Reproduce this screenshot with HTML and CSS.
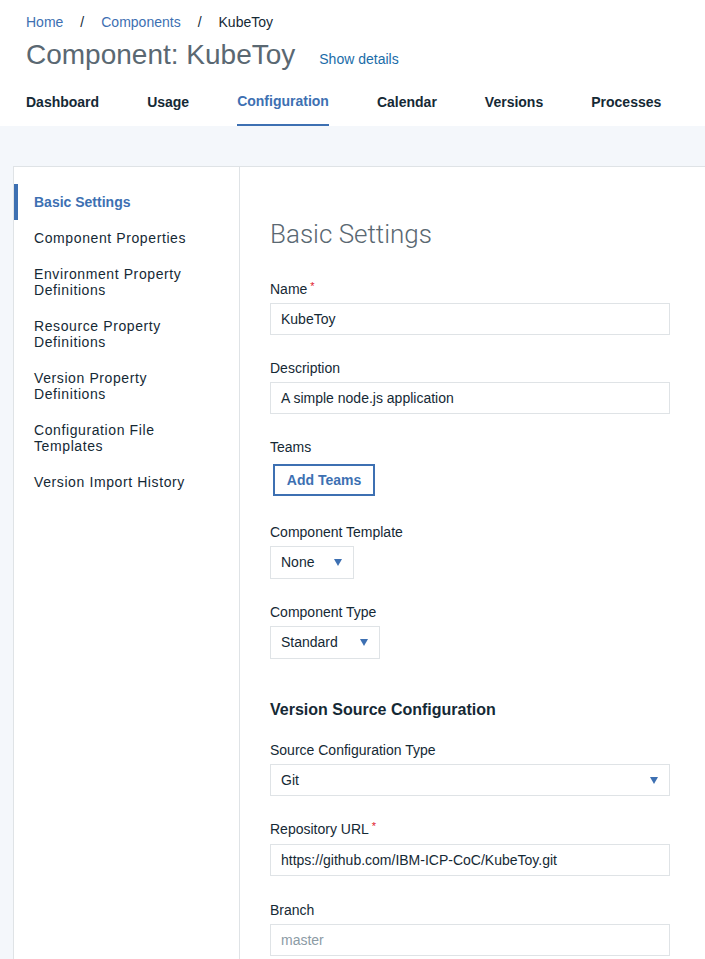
FILE: index.html
```html
<!DOCTYPE html>
<html>
<head>
<meta charset="utf-8">
<link rel="stylesheet" href="styles.css">
</head>
<body>
<header class="header">
  <nav class="crumbs">
    <a class="crumb-link">Home</a>
    <span class="crumb-sep">/</span>
    <a class="crumb-link">Components</a>
    <span class="crumb-sep">/</span>
    <span class="crumb-current">KubeToy</span>
  </nav>
  <div class="title-row">
    <h1 class="title">Component: KubeToy</h1>
    <a class="show-details">Show details</a>
  </div>
  <ul class="tabs">
    <li class="tab">Dashboard</li>
    <li class="tab">Usage</li>
    <li class="tab tab-active">Configuration</li>
    <li class="tab">Calendar</li>
    <li class="tab">Versions</li>
    <li class="tab">Processes</li>
  </ul>
</header>
<div class="stage">
  <div class="panel">
    <aside class="sidenav">
      <div class="nav-item nav-active">Basic Settings</div>
      <div class="nav-item">Component Properties</div>
      <div class="nav-item">Environment Property<br>Definitions</div>
      <div class="nav-item">Resource Property<br>Definitions</div>
      <div class="nav-item">Version Property<br>Definitions</div>
      <div class="nav-item">Configuration File<br>Templates</div>
      <div class="nav-item">Version Import History</div>
    </aside>
    <main class="content">
      <h2 class="page-heading">Basic Settings</h2>
      <div class="field">
        <div class="label">Name<span class="req">*</span></div>
        <div class="input">KubeToy</div>
      </div>
      <div class="field">
        <div class="label">Description</div>
        <div class="input">A simple node.js application</div>
      </div>
      <div class="field field-teams">
        <div class="label">Teams</div>
        <button class="btn-outline">Add Teams</button>
      </div>
      <div class="field">
        <div class="label">Component Template</div>
        <div class="select select-none">None<span class="caret"></span></div>
      </div>
      <div class="field">
        <div class="label">Component Type</div>
        <div class="select select-std">Standard<span class="caret"></span></div>
      </div>
      <h3 class="section-heading">Version Source Configuration</h3>
      <div class="field">
        <div class="label">Source Configuration Type</div>
        <div class="select select-full">Git<span class="caret"></span></div>
      </div>
      <div class="field field-loose">
        <div class="label">Repository URL<span class="req">*</span></div>
        <div class="input">https://github.com/IBM-ICP-CoC/KubeToy.git</div>
      </div>
      <div class="field">
        <div class="label">Branch</div>
        <div class="input placeholder">master</div>
      </div>
    </main>
  </div>
</div>
</body>
</html>
```

FILE: styles.css
```css
* { box-sizing: border-box; }
html, body { margin: 0; padding: 0; }
body {
  font-family: "Liberation Sans", Arial, sans-serif;
  color: #152935;
  background: #f4f7fb;
  overflow: hidden;
  height: 959px;
}
.header {
  background: #ffffff;
  padding: 13px 0 0 26px;
}
.crumbs {
  display: flex;
  align-items: center;
  font-size: 14px;
  line-height: 18px;
}
.crumb-link { color: #3d70b2; }
.crumb-sep { margin: 0 17px; color: #152935; }
.crumb-current { color: #152935; }
.title-row {
  display: flex;
  align-items: baseline;
  margin-top: 7px;
}
.title {
  margin: 0;
  font-size: 28px;
  line-height: 34px;
  font-weight: 400;
  color: #5a6872;
}
.show-details {
  margin-left: 24px;
  font-size: 14px;
  color: #1a6ca8;
}
.tabs {
  list-style: none;
  display: flex;
  gap: 48px;
  margin: 21px 0 0 0;
  padding: 0;
}
.tab {
  font-size: 14px;
  font-weight: 700;
  line-height: 18px;
  padding-bottom: 13px;
  border-bottom: 2px solid transparent;
  color: #152935;
}
.tab-active {
  color: #3d70b2;
  border-bottom-color: #3d70b2;
  padding-bottom: 14px;
  margin-top: -1px;
}
.stage {
  padding: 40px 0 0 13px;
}
.panel {
  display: flex;
  background: #ffffff;
  border-top: 1px solid #dfe3e6;
  border-left: 1px solid #dfe3e6;
  min-height: 800px;
}
.sidenav {
  width: 226px;
  flex-shrink: 0;
  border-right: 1px solid #dfe3e6;
  padding-top: 17px;
}
.nav-item {
  font-size: 14px;
  line-height: 16px;
  letter-spacing: 0.6px;
  padding: 10px 0 10px 16px;
  border-left: 4px solid transparent;
  color: #152935;
}
.nav-active {
  border-left-color: #3d70b2;
  color: #3d70b2;
  font-weight: 700;
  letter-spacing: 0;
}
.content {
  flex: 1;
  padding: 50px 35px 0 30px;
}
.page-heading {
  margin: 0 0 29px 0;
  font-family: Roboto, "Liberation Sans", Arial, sans-serif;
  font-size: 26px;
  line-height: 34px;
  font-weight: 300;
  color: #5a6872;
}
.field { margin-bottom: 24px; }
.field-loose { margin-bottom: 25px; }
.field-loose .label { margin-bottom: 6px; }
.label {
  font-size: 14px;
  line-height: 18px;
  height: 18px;
  margin-bottom: 5px;
  color: #152935;
}
.req {
  position: relative;
  top: -4px;
  color: #e0182d;
  font-size: 11px;
  line-height: 0;
  margin-left: 3px;
}
.input, .select {
  height: 32px;
  border: 1px solid #dfe3e6;
  font-size: 14px;
  line-height: 30px;
  padding: 0 10px;
  color: #152935;
  background: #ffffff;
  width: 400px;
}
.placeholder { color: #8c9ba5; }
.select {
  position: relative;
  height: 33px;
  line-height: 31px;
}
.select-none { width: 84px; }
.select-std { width: 110px; }
.select-full { width: 400px; height: 32px; line-height: 30px; }
.caret {
  position: absolute;
  right: 11px;
  top: 12px;
  width: 0;
  height: 0;
  border-left: 4px solid transparent;
  border-right: 4px solid transparent;
  border-top: 7px solid #3d70b2;
}
.field-teams { margin-bottom: 27px; }
.btn-outline {
  display: block;
  margin: 8px 0 0 3px;
  height: 32px;
  padding: 0 10px;
  background: #ffffff;
  border: 2px solid #3d70b2;
  color: #3d70b2;
  font-family: "Liberation Sans", Arial, sans-serif;
  font-size: 14px;
  font-weight: 700;
  width: 102px;
}
.section-heading {
  margin: 42px 0 22px 0;
  font-size: 16px;
  line-height: 18px;
  font-weight: 700;
  color: #152935;
}
```
